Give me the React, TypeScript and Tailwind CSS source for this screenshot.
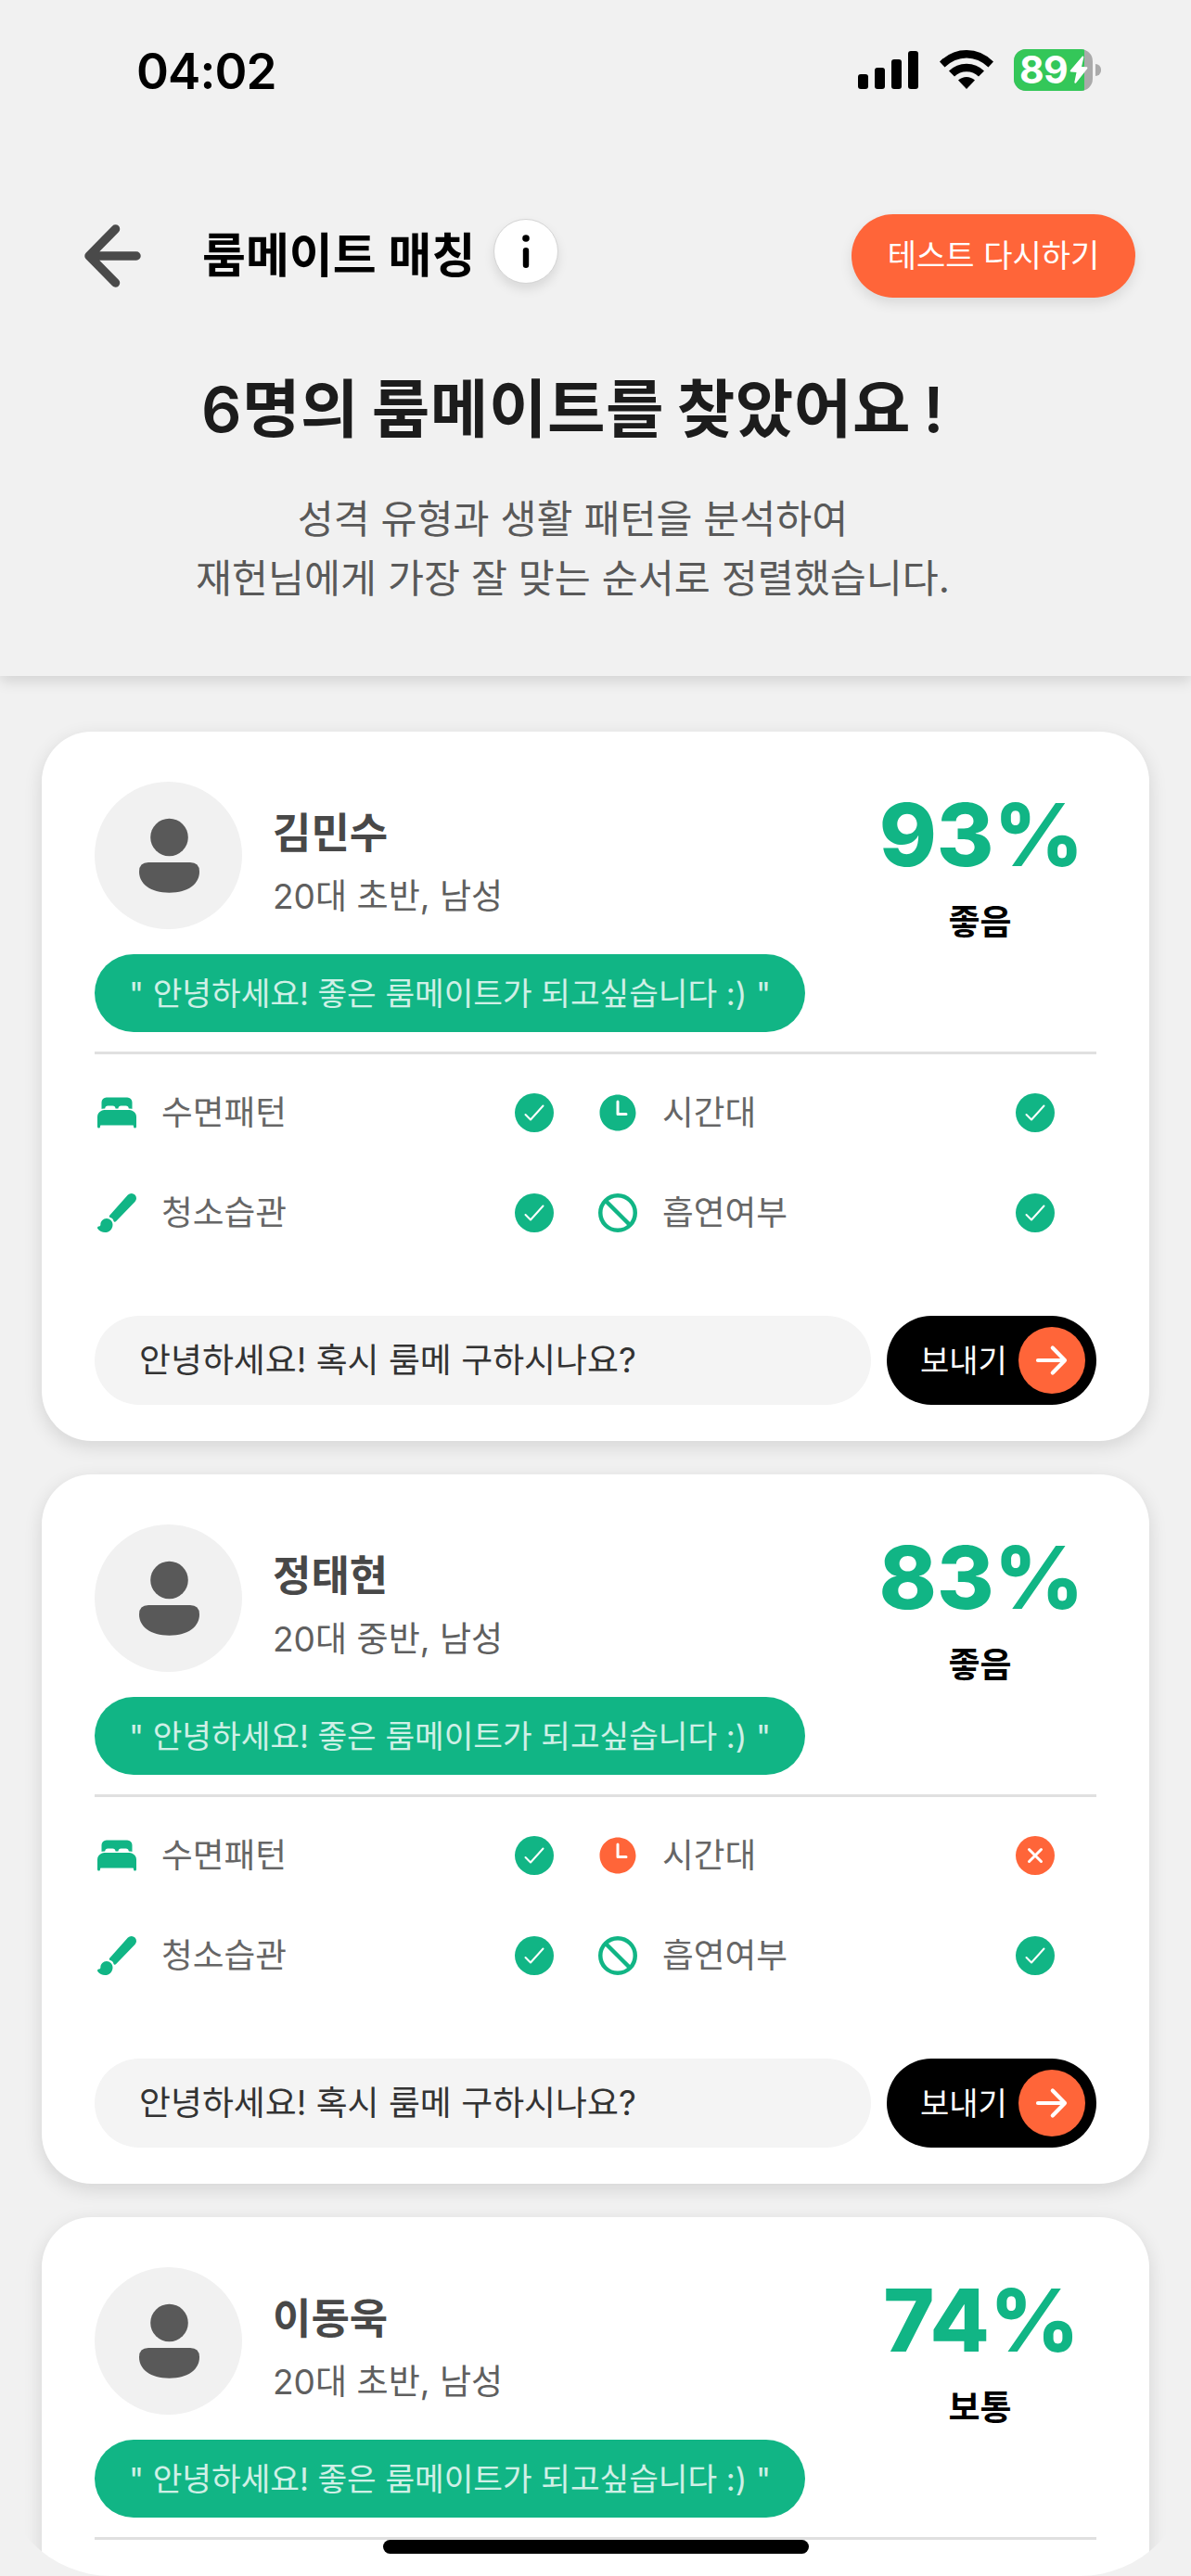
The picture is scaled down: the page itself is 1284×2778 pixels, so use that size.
import React from "react";
import { IoBan, IoBed, IoBrush, IoTime } from "react-icons/io5";

const GREEN = "text-[#11b585]";
const ORANGE = "text-[#ff6539]";

type Match = {
  name: string;
  info: string;
  score: string;
  grade: string;
  timeMatches: boolean;
};

const matches: Match[] = [
  { name: "김민수", info: "20대 초반, 남성", score: "93%", grade: "좋음", timeMatches: true },
  { name: "정태현", info: "20대 중반, 남성", score: "83%", grade: "좋음", timeMatches: false },
  { name: "이동욱", info: "20대 초반, 남성", score: "74%", grade: "보통", timeMatches: true },
];

function StatusBar() {
  return (
    <div className="flex h-[150px] items-start justify-between pr-[97px] pl-[147px]">
      <div className="mt-[47px] text-[53px] leading-[60px] font-semibold tracking-[-0.9px] text-black">04:02</div>
      <div className="mt-[53px] flex items-start">
        <svg width="65" height="45" viewBox="0 0 65 45" className="mr-[23px]">
          <rect x="0" y="27" width="11" height="16" rx="3" />
          <rect x="18" y="20" width="11" height="23" rx="3" />
          <rect x="36" y="11" width="11" height="32" rx="3" />
          <rect x="54" y="2" width="11" height="41" rx="3" />
        </svg>
        <svg width="58" height="45" viewBox="0 0 58 45" className="mr-[22px]">
          <path d="M0 13.5 Q12.5 1 29 1 Q45.500 1 58 13.500 L52.500 19.500 Q42 9.500 29 9.500 Q16 9.500 5.500 19.500 Z" />
          <path d="M10 23.500 Q18 15.700 29 15.700 Q40 15.700 48 23.500 L42 29.500 Q36.500 24.300 29 24.300 Q21.500 24.300 16 29.500 Z" />
          <path d="M20 33.500 Q24 30 29 30 Q34 30 38 33.500 L29 43 Z" />
        </svg>
        <div className="relative h-[45px] w-[85px] overflow-hidden rounded-[13px] bg-[#aaaaaa]">
          <div className="h-full w-[76px] bg-[#34c759]" />
          <div className="absolute top-0 left-[6px] text-[41px] leading-[45px] font-bold tracking-[-0.8px] text-white">89</div>
          <svg width="20" height="31" viewBox="0 0 20 31" className="absolute top-[7px] left-[60px]">
            <path d="M14 0.500 Q15.500 0 15.300 2 L13 12 L18.800 12.300 Q20 12.800 19.200 14 L7 29.500 Q5.500 30.500 5.300 28.800 L7.500 18 L1.500 17.600 Q0 17.200 1 15.800 Z" fill="white" />
          </svg>
        </div>
        <div className="mt-[16px] ml-[3px] h-[13px] w-[6px] rounded-r-full bg-[#aaaaaa]" />
      </div>
    </div>
  );
}

function Header() {
  return (
    <header className="relative z-10 h-[729px] shrink-0 bg-[#f1f1f1] shadow-[0_6px_14px_rgba(0,0,0,0.12)]">
      <StatusBar />
      <div className="flex h-[252px] items-start pt-[81px] pr-[60px] pl-[87px]">
        <svg width="70" height="90" viewBox="0 0 70 90" className="shrink-0" fill="none" stroke="#4a4a4a" strokeWidth="9.500" strokeLinecap="round" strokeLinejoin="round">
          <path d="M60 45 H9 M37.500 16 L9 45 L37.500 74" />
        </svg>
        <h1 className="ml-[61px] text-[51px] leading-[90px] font-semibold whitespace-nowrap text-black">룸메이트 매칭</h1>
        <div className="mt-[5px] ml-[20px] flex h-[70px] w-[70px] shrink-0 items-center justify-center rounded-full border border-[#d4d4d4] bg-white shadow-[0_6px_12px_rgba(0,0,0,0.1)]">
          <svg width="10" height="36" viewBox="0 0 10 36">
            <circle cx="5" cy="4" r="3.800" />
            <rect x="1.800" y="14" width="6.400" height="22" rx="3.200" />
          </svg>
        </div>
        <button className="ml-auto h-[90px] w-[306px] rounded-full bg-[#ff6539] text-[34px] leading-[90px] whitespace-nowrap text-white shadow-[0_6px_14px_rgba(0,0,0,0.1)]">
          테스트 다시하기
        </button>
      </div>
      <div className="w-[1235px] text-center">
        <h2 className="-mt-[4px] text-[68px] leading-[86px] font-semibold tracking-[0.5px] whitespace-nowrap text-[#1c1c1c] [word-spacing:-4px]">6명의 룸메이트를 찾았어요 !</h2>
        <p className="mt-[44px] text-[42.4px] leading-[64px] whitespace-nowrap text-[#595959]">
          성격 유형과 생활 패턴을 분석하여
          <br />
          재헌님에게 가장 잘 맞는 순서로 정렬했습니다.
        </p>
      </div>
    </header>
  );
}

function Avatar() {
  return (
    <div className="h-[159px] w-[159px] shrink-0 rounded-full bg-[#f1f1f1]">
      <svg width="159" height="159" viewBox="0 0 159 159" fill="#595959">
        <circle cx="80.500" cy="60" r="20.300" />
        <path d="M58 87 H103 Q113 87 113 97 C113 110 101 119.700 80.500 119.700 C60 119.700 48 110 48 97 Q48 87 58 87 Z" />
      </svg>
    </div>
  );
}

function StatusMark({ ok }: { ok: boolean }) {
  return (
    <svg width="42" height="42" viewBox="0 0 42 42" className={ok ? GREEN : ORANGE} fill="none" strokeLinecap="round" strokeLinejoin="round">
      <circle cx="21" cy="21" r="21" fill="currentColor" />
      {ok ? (
        <path d="M11.500 23 L17 28.500 L30.500 13.500" stroke="white" strokeWidth="2" />
      ) : (
        <path d="M14.500 14.500 L27.500 27.500 M27.500 14.500 L14.500 27.500" stroke="white" strokeWidth="3" />
      )}
    </svg>
  );
}

function Feature({ icon, label, ok }: { icon: React.ReactNode; label: string; ok: boolean }) {
  return (
    <div className="flex h-[48px] items-center pr-[45px]">
      {icon}
      <span className="ml-[24px] text-[36.7px] leading-[48px] font-normal whitespace-nowrap text-[#666666]">{label}</span>
      <span className="ml-auto">
        <StatusMark ok={ok} />
      </span>
    </div>
  );
}

function MatchCard({ match }: { match: Match }) {
  return (
    <article className="h-[765px] w-[1194px] shrink-0 rounded-[54px] bg-white px-[57px] pt-[54px] shadow-[0_6px_20px_rgba(0,0,0,0.12)]">
      <div className="flex h-[186px]">
        <Avatar />
        <div className="ml-[33px] pt-[24px]">
          <div className="text-[45px] leading-[64px] font-semibold text-[#484848]">{match.name}</div>
          <div className="mt-[11px] text-[37.1px] leading-[50px] text-[#5f5f5f]">{match.info}</div>
        </div>
        <div className="mr-[4px] ml-auto w-[240px] text-center">
          <div className="mt-[12px] text-[94px] leading-[90px] font-extrabold text-[#11b585]">{match.score}</div>
          <div className="mt-[23px] pr-[3px] text-[37px] leading-[54px] font-semibold text-black">{match.grade}</div>
        </div>
      </div>
      <div className="h-[84px] w-[766px] rounded-full bg-[#11b585] text-center text-[34.4px] leading-[85px] whitespace-nowrap text-white/80">
        &quot; 안녕하세요! 좋은 룸메이트가 되고싶습니다 :) &quot;
      </div>
      <div className="mt-[21px] h-[3px] bg-[#e0e0e0]" />
      <div className="mt-[39px] grid grid-cols-2 gap-y-[60px]">
        <Feature icon={<IoBed size={48} className={GREEN} />} label="수면패턴" ok />
        <Feature icon={<IoTime size={48} className={match.timeMatches ? GREEN : ORANGE} />} label="시간대" ok={match.timeMatches} />
        <Feature icon={<IoBrush size={48} className={GREEN} />} label="청소습관" ok />
        <Feature icon={<IoBan size={48} className={GREEN} />} label="흡연여부" ok />
      </div>
      <div className="mt-[87px] flex justify-between">
        <div className="h-[96px] w-[837px] rounded-full bg-[#f4f4f4] pl-[48px] text-[36.9px] leading-[95px] text-[#333333]">안녕하세요! 혹시 룸메 구하시나요?</div>
        <button className="flex h-[96px] w-[226px] items-center justify-between rounded-full bg-black pr-[12px] pl-[36px] text-[34px] text-white">
          <span className="whitespace-nowrap">보내기</span>
          <span className="flex h-[72px] w-[72px] items-center justify-center rounded-full bg-[#ff6539]">
            <svg width="36" height="36" viewBox="0 0 36 36" fill="none" stroke="white" strokeWidth="4.200" strokeLinecap="round" strokeLinejoin="round">
              <path d="M3 18 H32 M18.800 4.500 L32 18 L18.800 31.500" />
            </svg>
          </span>
        </button>
      </div>
    </article>
  );
}

export default function App() {
  return (
    <div className="h-[2778px] w-[1284px] bg-[#f1f1f1] font-['Inter','Noto_Sans_CJK_KR',sans-serif]">
      <div className="relative flex h-full flex-col overflow-hidden rounded-b-[120px]">
        <Header />
        <main className="flex flex-col items-center gap-[36px] pt-[60px]">
          {matches.map((m) => (
            <MatchCard key={m.name} match={m} />
          ))}
        </main>
        <div className="absolute bottom-[24px] left-[413px] h-[15px] w-[459px] rounded-full bg-black" />
      </div>
    </div>
  );
}
